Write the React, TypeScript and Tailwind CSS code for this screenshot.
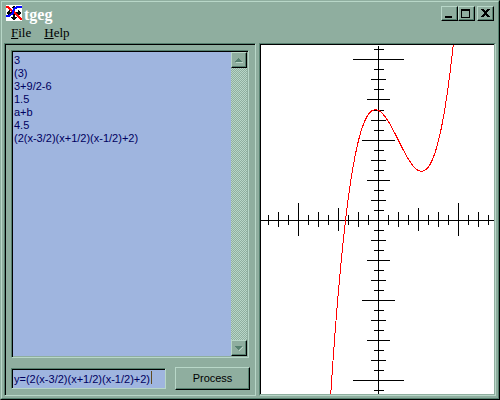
import { useState } from "react";

const UNIT = 40;
const ORIGIN_X = 117;
const ORIGIN_Y = 175;
const VIEW_W = 233;
const VIEW_H = 349;

const HISTORY = ["3", "(3)", "3+9/2-6", "1.5", "a+b", "4.5", "(2(x-3/2)(x+1/2)(x-1/2)+2)"];

const raised = "border border-t-[#b8d7c8] border-l-[#b8d7c8] border-r-black border-b-black bg-[#8fae9f] shadow-[inset_-1px_-1px_0_#56806f]";
const sunken = "border border-t-[#56806f] border-l-[#56806f] border-r-[#b8d7c8] border-b-[#b8d7c8]";

function f(x: number) {
    return 2 * (x - 3 / 2) * (x + 1 / 2) * (x - 1 / 2) + 2;
}

// [offset on the x axis, offset on the y axis, length]
function tickSpan(n: number): [number, number, number] {
    if (n % 16 === 0) return [-26, -25, 51];
    if (n % 8 === 0) return [-17, -16, 33];
    if (n % 4 === 0) return [-12, -11, 23];
    if (n % 2 === 0) return [-8, -7, 15];
    return [-5, -4, 10];
}

function Graph() {
    const xs = Array.from({ length: 23 }, (_, i) => i - 11).filter((n) => n !== 0);
    const ys = Array.from({ length: 35 }, (_, i) => i - 17).filter((n) => n !== 0);
    const points = Array.from({ length: VIEW_W }, (_, px) => {
        const y = ORIGIN_Y - UNIT * f((px - ORIGIN_X) / UNIT);
        return `${px + 0.5},${y + 0.5}`;
    }).join(" ");

    return (
        <svg viewBox={`0 0 ${VIEW_W} ${VIEW_H}`} preserveAspectRatio="xMidYMid slice" shapeRendering="crispEdges" className="absolute inset-0 h-full w-full" role="img" aria-label="Graph">
            <rect x={ORIGIN_X} y={1} width={1} height={VIEW_H} />
            <rect x={0} y={ORIGIN_Y} width={VIEW_W} height={1} />
            {xs.map((n) => {
                const [start, , length] = tickSpan(n);
                return <rect key={n} x={ORIGIN_X + n * 10} y={ORIGIN_Y + start} width={1} height={length} />;
            })}
            {ys.map((n) => {
                const [, start, length] = tickSpan(n);
                return <rect key={n} x={ORIGIN_X + start} y={ORIGIN_Y + n * 10 - (n < -11 ? 1 : 0)} width={length} height={1} />;
            })}
            <polyline points={points} fill="none" stroke="#f00" strokeWidth={1} />
        </svg>
    );
}

function AppIcon() {
    return (
        <svg viewBox="0 0 16 16" className="h-4 w-4" shapeRendering="crispEdges" aria-hidden="true">
            <rect width="16" height="16" fill="#fff" />
            <path d="M7 1h2v14H7zM1 7h14v2H1zM6 2h4v1H6zM5 12h6v1H5zM6 13h4v1H6zM3 5h1v6H3zM2 6h1v4H2zM12 5h1v6h-1zM13 6h1v4h-1z" fill="#000" />
            <path d="M0 1h3v1h1v1h1v1h1v1h1v1h2v1h1v1h1v1h1v1h1v1h1v1h1v1h1v2h-2v-1h-1v-1h-1v-1h-1v-1h-1v-1H9V9H8V8H6V7H5V6H4V5H3V4H2V3H0z" fill="#f00" />
            <path d="M0 10h3V9h2V8h1V5h1V3h1V2h2V1h6v2h-5v1H9v2H8v3H7v1H5v1H4v1H0z" fill="#00f" />
        </svg>
    );
}

export default function App() {
    const [history, setHistory] = useState(HISTORY.join("\n"));
    const [formula, setFormula] = useState("y=(2(x-3/2)(x+1/2)(x-1/2)+2)");

    return (
        <main className="flex h-screen w-full flex-col border border-t-[#8fae9f] border-l-[#8fae9f] border-r-black border-b-black bg-[#8fae9f] font-['Liberation_Sans',Arial,sans-serif] text-[11px] text-black">
            <div className="flex min-h-0 flex-1 flex-col border border-t-[#b8d7c8] border-l-[#b8d7c8] border-r-[#56806f] border-b-[#56806f] px-[2px] pt-[3px] pb-[2px]">
                {/* title bar */}
                <header className="flex h-4 shrink-0 items-end px-[2px]">
                    <AppIcon />
                    <h1 className="flex-1 pl-[2px] font-['Liberation_Serif',serif] text-[16px] leading-3 font-bold text-white">tgeg</h1>
                    <button aria-label="Minimize" className={`${raised} h-[15px] w-[17px]`}>
                        <svg viewBox="0 0 15 13" shapeRendering="crispEdges" className="block h-[13px] w-[15px]"><path d="M3 9h7v2H3z" /></svg>
                    </button>
                    <button aria-label="Maximize" className={`${raised} h-[15px] w-[17px]`}>
                        <svg viewBox="0 0 15 13" shapeRendering="crispEdges" className="block h-[13px] w-[15px]"><path fillRule="evenodd" d="M2 2h9v9H2zM3 4h7v6H3z" /></svg>
                    </button>
                    <button aria-label="Close" className={`${raised} ml-[2px] h-[15px] w-[17px]`}>
                        <svg viewBox="0 0 15 13" shapeRendering="crispEdges" className="block h-[13px] w-[15px]"><path d="M3 2h3v1h1v1h1V3h1V2h3v1h-1v1h-1v1H9v2h1v1h1v1h1v1H9V9H8V8H7v1H6v1H3V9h1V8h1V7h1V5H5V4H4V3H3z" /></svg>
                    </button>
                </header>

                {/* menu */}
                <nav className="flex h-[22px] shrink-0 items-center gap-[13px] pt-[2px] pl-[7px] font-['Liberation_Serif',serif] text-[13px]">
                    <button><u>F</u>ile</button>
                    <button><u>H</u>elp</button>
                </nav>

                <div className="flex min-h-0 flex-1 gap-[3px]">
                    <section className={`${sunken} flex min-h-0 w-[252px] shrink-0 flex-col`}>
                        <form className="flex min-h-0 flex-1 flex-col gap-[9px] border-t border-l border-black p-[5px]" onSubmit={(e) => e.preventDefault()}>
                            <div className={`${sunken} mr-px flex min-h-0 flex-1`}>
                                <div className="flex min-h-0 flex-1 border-t border-l border-black pr-px pb-px">
                                    <textarea aria-label="Results" value={history} onChange={(e) => setHistory(e.target.value)} className="min-w-0 flex-1 resize-none overflow-hidden bg-[#9fb5df] px-px pt-[2px] leading-[13px] text-[#000060] outline-none" />
                                    <div className="flex w-4 shrink-0 flex-col justify-between bg-[repeating-conic-gradient(#b8d7c8_0_25%,#8fae9f_0_50%)] bg-[length:2px_2px]">
                                        <button type="button" aria-label="Scroll up" className={`${raised} h-4 w-4`}>
                                            <svg viewBox="0 0 14 14" shapeRendering="crispEdges" className="block h-[14px] w-[14px]"><path d="M4 9h7v1H4z" fill="#b8d7c8" /><path d="M6 5h1v1h1v1h1v1h1v1H3V8h1V7h1V6h1z" fill="#56806f" /></svg>
                                        </button>
                                        <button type="button" aria-label="Scroll down" className={`${raised} h-4 w-4`}>
                                            <svg viewBox="0 0 14 14" shapeRendering="crispEdges" className="block h-[14px] w-[14px]"><path d="M10 6h1v1h-1v1H9v1H8v1H7V9h1V8h1V7h1z" fill="#b8d7c8" /><path d="M3 5h7v1H9v1H8v1H7v1H6V8H5V7H4V6H3z" fill="#56806f" /></svg>
                                        </button>
                                    </div>
                                </div>
                            </div>
                            <div className="flex shrink-0 items-center gap-[9px]">
                                <div className={`${sunken} relative flex h-[21px] min-w-0 flex-1`}>
                                    <input aria-label="Formula" value={formula} onChange={(e) => setFormula(e.target.value)} className="min-w-0 flex-1 border-t border-l border-black bg-[#9fb5df] pl-px text-[#000060] outline-none" />
                                    {/* caret */}
                                    <span className="absolute top-[2px] left-[139px] h-[13px] w-px bg-[#604a20]" />
                                </div>
                                <button className={`${raised} h-[23px] w-[75px]`}>Process</button>
                            </div>
                        </form>
                    </section>
                    <section className={`${sunken} flex min-w-0 flex-1 pr-px pb-px`}>
                        <div className="relative flex-1 border-t border-l border-black bg-white">
                            <Graph />
                        </div>
                    </section>
                </div>
            </div>
        </main>
    );
}
